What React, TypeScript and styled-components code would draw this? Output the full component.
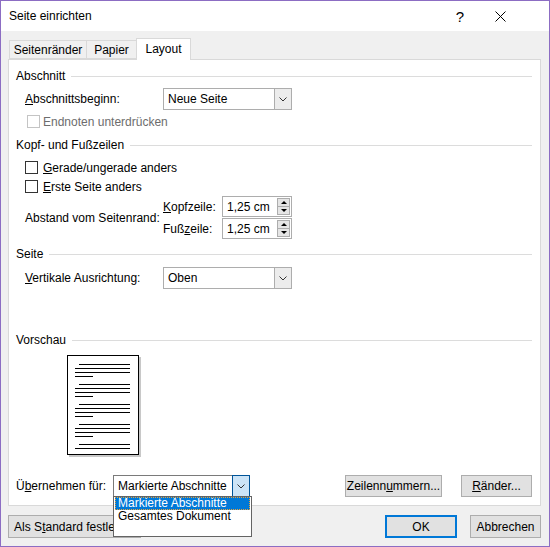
import React from "react";
import styled, { createGlobalStyle } from "styled-components";

const GlobalStyle = createGlobalStyle`
  html, body { margin: 0; padding: 0; background: #fff; }
  body {
    font-family: "Liberation Sans", Arial, sans-serif;
    font-size: 12px;
    color: #000;
  }
  * { box-sizing: border-box; }
`;

const Window = styled.div`
  width: 550px;
  height: 547px;
  border: 1px solid #8c6dc3;
  display: flex;
  flex-direction: column;
  background: #f0f0f0;
`;

const TitleBar = styled.div`
  height: 30px;
  background: #fff;
  display: flex;
  align-items: center;
  padding: 0 32px 0 8px;
`;

const Title = styled.div`
  flex: 1;
`;

const TitleButton = styled.div`
  width: 34px;
  height: 30px;
  display: flex;
  align-items: center;
  justify-content: center;
  font-size: 15px;
  margin-left: 6px;
`;

const Body = styled.div`
  flex: 1;
  padding: 7px 8px 0 7px;
  display: flex;
  flex-direction: column;
`;

const TabStrip = styled.div`
  display: flex;
  align-items: flex-end;
  height: 21px;
  padding-left: 1px;
`;

const Tab = styled.div<{ $active?: boolean; $w: number }>`
  width: ${(p) => p.$w}px;
  height: ${(p) => (p.$active ? 22 : 19)}px;
  margin-bottom: ${(p) => (p.$active ? -1 : 0)}px;
  margin-left: -1px;
  border: 1px solid #d9d9d9;
  border-bottom: ${(p) => (p.$active ? "none" : "1px solid #d9d9d9")};
  background: ${(p) => (p.$active ? "#fff" : "#f0f0f0")};
  display: flex;
  align-items: ${(p) => (p.$active ? "flex-start" : "center")};
  padding-top: ${(p) => (p.$active ? 3 : 0)}px;
  justify-content: center;
  position: relative;
  z-index: ${(p) => (p.$active ? 2 : 1)};
  &:first-child { margin-left: 0; }
`;

const Panel = styled.div`
  height: 447px;
  background: #fff;
  border: 1px solid #d9d9d9;
  padding: 8px 8px 0 7px;
  display: flex;
  flex-direction: column;
`;

const SectionTitle = styled.div<{ $mt: number }>`
  display: flex;
  align-items: center;
  gap: 6px;
  height: 16px;
  margin-top: ${(p) => p.$mt}px;
  &::after {
    content: "";
    flex: 1;
    height: 1px;
    background: #dcdcdc;
  }
`;

const Row = styled.div<{ $mt: number; $h: number; $indent?: number }>`
  display: flex;
  align-items: center;
  height: ${(p) => p.$h}px;
  margin-top: ${(p) => p.$mt}px;
  padding-left: ${(p) => p.$indent ?? 0}px;
`;

const Label = styled.div<{ $w?: number; $disabled?: boolean }>`
  width: ${(p) => (p.$w ? `${p.$w}px` : "auto")};
  flex: none;
  color: ${(p) => (p.$disabled ? "#6d6d6d" : "#000")};
  white-space: nowrap;
`;

const Select = styled.div<{ $w: number; $focus?: boolean }>`
  position: relative;
  width: ${(p) => p.$w}px;
  height: 22px;
  border: 1px solid ${(p) => (p.$focus ? "#7a7a7a" : "#adadad")};
  background: #fff;
  display: flex;
`;

const SelectValue = styled.div`
  flex: 1;
  display: flex;
  align-items: center;
  padding-left: 4px;
  white-space: nowrap;
`;

const ArrowBox = styled.div<{ $focus?: boolean }>`
  width: ${(p) => (p.$focus ? 18 : 17)}px;
  margin: ${(p) => (p.$focus ? "-1px -1px -1px 0" : "0")};
  border-left: 1px solid ${(p) => (p.$focus ? "#005499" : "#adadad")};
  border: ${(p) => (p.$focus ? "1px solid #005499" : undefined)};
  background: ${(p) => (p.$focus ? "#cce4f7" : "#ececec")};
  display: flex;
  align-items: center;
  justify-content: center;
`;

const DropList = styled.div`
  position: absolute;
  top: 20px;
  left: -1px;
  width: 139px;
  height: 41px;
  background: #fff;
  border: 1px solid #646464;
  z-index: 10;
`;

const DropItem = styled.div<{ $selected?: boolean }>`
  height: 13px;
  line-height: 12px;
  padding-left: 3px;
  margin: 0 1px;
  white-space: nowrap;
  background: ${(p) => (p.$selected ? "#0078d7" : "transparent")};
  color: ${(p) => (p.$selected ? "#fff" : "#000")};
  outline: ${(p) => (p.$selected ? "1px dotted #e8a33c" : "none")};
  outline-offset: -1px;
`;

const CheckRow = styled.label<{ $disabled?: boolean }>`
  display: flex;
  align-items: center;
  gap: 5px;
  color: ${(p) => (p.$disabled ? "#6d6d6d" : "#000")};
`;

const CheckText = styled.span<{ $shift?: number }>`
  margin-left: ${(p) => p.$shift ?? 0}px;
`;

const Box = styled.span<{ $disabled?: boolean; $offset?: number }>`
  width: 13px;
  height: 13px;
  margin-left: ${(p) => p.$offset ?? 0}px;
  border: 1px solid ${(p) => (p.$disabled ? "#c4c4c4" : "#333")};
  background: #fff;
`;

const SpinGroup = styled.div`
  display: flex;
  flex-direction: column;
  gap: 1px;
`;

const Spin = styled.div`
  width: 70px;
  height: 21px;
  border: 1px solid #adadad;
  display: flex;
  align-items: center;
  padding: 1px 1px 1px 4px;
`;

const SpinValue = styled.div`
  flex: 1;
`;

const SpinButtons = styled.div`
  width: 13px;
  height: 17px;
  display: flex;
  flex-direction: column;
  border: 1px solid #adadad;
  background: #e5e5e5;
`;

const SpinHalf = styled.div<{ $down?: boolean }>`
  flex: 1;
  display: flex;
  align-items: center;
  justify-content: center;
  border-top: ${(p) => (p.$down ? "1px solid #adadad" : "none")};
  &::before {
    content: "";
    border-left: 3px solid transparent;
    border-right: 3px solid transparent;
    ${(p) => (p.$down ? "border-top: 3px solid #000;" : "border-bottom: 3px solid #000;")}
  }
`;

const Button = styled.button<{ $w: number; $h?: number; $primary?: boolean }>`
  width: ${(p) => p.$w}px;
  height: ${(p) => p.$h ?? 23}px;
  background: #e1e1e1;
  border: ${(p) => (p.$primary ? "2px solid #0078d7" : "1px solid #adadad")};
  font-family: inherit;
  font-size: 12px;
  color: #000;
  padding: 0;
  white-space: nowrap;
  overflow: hidden;
`;

const RightButtons = styled.div`
  margin-left: auto;
  display: flex;
  gap: 19px;
`;

const Preview = styled.div`
  margin: 7px 0 0 51px;
  height: 102px;
`;

const Footer = styled.div`
  display: flex;
  align-items: flex-start;
  padding-top: 9px;
  gap: 13px;
`;

const FooterLeft = styled.div`
  flex: 1;
`;

const Chevron = () => (
  <svg width="8" height="5" viewBox="0 0 8 5">
    <polyline points="0.5,0.5 4,4 7.5,0.5" fill="none" stroke="#333" strokeWidth="1" />
  </svg>
);

const CloseIcon = () => (
  <svg width="11" height="11" viewBox="0 0 11 11">
    <path d="M0.5 0.5 L10.5 10.5 M10.5 0.5 L0.5 10.5" stroke="#000" strokeWidth="1" />
  </svg>
);

const PagePreview = () => {
  const lines: React.ReactNode[] = [];
  const groups = [9, 29, 49, 69];
  groups.forEach((y, i) => {
    lines.push(<line key={`a${i}`} x1={12} x2={63} y1={y + 0.5} y2={y + 0.5} />);
    lines.push(<line key={`b${i}`} x1={8} x2={63} y1={y + 4.5} y2={y + 4.5} />);
    lines.push(<line key={`c${i}`} x1={8} x2={63} y1={y + 8.5} y2={y + 8.5} />);
    lines.push(<line key={`d${i}`} x1={8} x2={26} y1={y + 12.5} y2={y + 12.5} />);
  });
  lines.push(<line key="e1" x1={12} x2={63} y1={89.5} y2={89.5} />);
  lines.push(<line key="e2" x1={8} x2={63} y1={93.5} y2={93.5} />);
  return (
    <svg width="75" height="102" viewBox="0 0 75 102">
      <rect x="2" y="2" width="72" height="100" fill="#c8c8c8" />
      <rect x="0.5" y="0.5" width="71" height="99" fill="#fff" stroke="#000" />
      <g stroke="#000" strokeWidth="1">{lines}</g>
    </svg>
  );
};

export default function App() {
  return (
    <>
      <GlobalStyle />
      <Window>
        <TitleBar>
          <Title>Seite einrichten</Title>
          <TitleButton>?</TitleButton>
          <TitleButton>
            <CloseIcon />
          </TitleButton>
        </TitleBar>
        <Body>
          <TabStrip>
            <Tab $w={78}>Seitenränder</Tab>
            <Tab $w={51}>Papier</Tab>
            <Tab $w={55} $active>
              Layout
            </Tab>
          </TabStrip>
          <Panel>
            <SectionTitle $mt={0}>Abschnitt</SectionTitle>
            <Row $mt={4} $h={22} $indent={9}>
              <Label $w={138}>
                <u>A</u>bschnittsbeginn:
              </Label>
              <Select $w={129}>
                <SelectValue>Neue Seite</SelectValue>
                <ArrowBox>
                  <Chevron />
                </ArrowBox>
              </Select>
            </Row>
            <Row $mt={5} $h={13} $indent={9}>
              <CheckRow $disabled>
                <Box $disabled $offset={2} />
                <CheckText $shift={-2}>Endnoten unterdrücken</CheckText>
              </CheckRow>
            </Row>

            <SectionTitle $mt={9}>Kopf- und Fußzeilen</SectionTitle>
            <Row $mt={8} $h={13} $indent={9}>
              <CheckRow>
                <Box />
                <CheckText>
                  <u>G</u>erade/ungerade anders
                </CheckText>
              </CheckRow>
            </Row>
            <Row $mt={6} $h={13} $indent={9}>
              <CheckRow>
                <Box />
                <CheckText>
                  <u>E</u>rste Seite anders
                </CheckText>
              </CheckRow>
            </Row>
            <Row $mt={3} $h={43} $indent={9}>
              <Label $w={138}>Abstand vom Seitenrand:</Label>
              <SpinGroup>
                <Row $mt={0} $h={21}>
                  <Label $w={59}>
                    <u>K</u>opfzeile:
                  </Label>
                  <Spin>
                    <SpinValue>1,25 cm</SpinValue>
                    <SpinButtons>
                      <SpinHalf />
                      <SpinHalf $down />
                    </SpinButtons>
                  </Spin>
                </Row>
                <Row $mt={0} $h={21}>
                  <Label $w={59}>
                    Fuß<u>z</u>eile:
                  </Label>
                  <Spin>
                    <SpinValue>1,25 cm</SpinValue>
                    <SpinButtons>
                      <SpinHalf />
                      <SpinHalf $down />
                    </SpinButtons>
                  </Spin>
                </Row>
              </SpinGroup>
            </Row>

            <SectionTitle $mt={7}>Seite</SectionTitle>
            <Row $mt={5} $h={22} $indent={9}>
              <Label $w={138}>
                <u>V</u>ertikale Ausrichtung:
              </Label>
              <Select $w={129}>
                <SelectValue>Oben</SelectValue>
                <ArrowBox>
                  <Chevron />
                </ArrowBox>
              </Select>
            </Row>

            <SectionTitle $mt={43}>Vorschau</SectionTitle>
            <Preview>
              <PagePreview />
            </Preview>

            <Row $mt={18} $h={22}>
              <Label $w={97}>
                Ü<u>b</u>ernehmen für:
              </Label>
              <Select $w={137} $focus>
                <SelectValue>Markierte Abschnitte</SelectValue>
                <ArrowBox $focus>
                  <Chevron />
                </ArrowBox>
                <DropList>
                  <DropItem $selected>Markierte Abschnitte</DropItem>
                  <DropItem>Gesamtes Dokument</DropItem>
                </DropList>
              </Select>
              <RightButtons>
                <Button $w={97} $h={22}>
                  Zeilenn<u>u</u>mmern...
                </Button>
                <Button $w={71} $h={22}>
                  <u>R</u>änder...
                </Button>
              </RightButtons>
            </Row>
          </Panel>
          <Footer>
            <FooterLeft>
              <Button $w={133}>
                Als S<u>t</u>andard festlegen
              </Button>
            </FooterLeft>
            <Button $w={72} $primary>
              OK
            </Button>
            <Button $w={71}>Abbrechen</Button>
          </Footer>
        </Body>
      </Window>
    </>
  );
}
